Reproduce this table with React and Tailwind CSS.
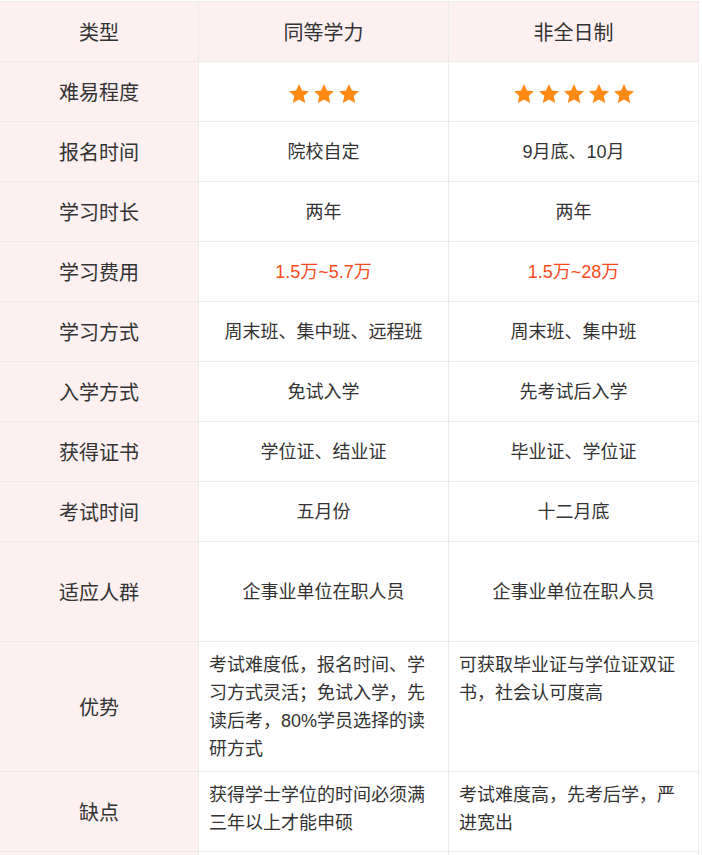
import React from "react";

const Star = () => (
  <svg width="20" height="19" viewBox="1.2 1.2 21.6 20.5" className="block">
    <path
      fill="#ff8a14"
      d="M12 1.2l3.18 7.02 7.62.78-5.7 5.16 1.62 7.5L12 17.82 5.28 21.66l1.62-7.5L1.2 9l7.62-.78z"
    />
  </svg>
);

const Stars = ({ n }) => (
  <div className="flex gap-[5px] mt-[2px]">
    {Array.from({ length: n }).map((_, i) => (
      <Star key={i} />
    ))}
  </div>
);

const rows = [
  { label: "难易程度", a: <Stars n={3} />, b: <Stars n={5} />, h: "h-[60px]" },
  { label: "报名时间", a: "院校自定", b: "9月底、10月", h: "h-[60px]" },
  { label: "学习时长", a: "两年", b: "两年", h: "h-[60px]" },
  {
    label: "学习费用",
    a: <span className="text-[#fa4b1e]">1.5万~5.7万</span>,
    b: <span className="text-[#fa4b1e]">1.5万~28万</span>,
    h: "h-[60px]",
  },
  { label: "学习方式", a: "周末班、集中班、远程班", b: "周末班、集中班", h: "h-[60px]" },
  { label: "入学方式", a: "免试入学", b: "先考试后入学", h: "h-[60px]" },
  { label: "获得证书", a: "学位证、结业证", b: "毕业证、学位证", h: "h-[60px]" },
  { label: "考试时间", a: "五月份", b: "十二月底", h: "h-[60px]" },
  { label: "适应人群", a: "企事业单位在职人员", b: "企事业单位在职人员", h: "h-[100px]" },
  {
    label: "优势",
    a: "考试难度低，报名时间、学习方式灵活；免试入学，先读后考，80%学员选择的读研方式",
    b: "可获取毕业证与学位证双证书，社会认可度高",
    h: "h-[130px]",
    multi: true,
  },
  {
    label: "缺点",
    a: "获得学士学位的时间必须满三年以上才能申硕",
    b: "考试难度高，先考后学，严进宽出",
    h: "h-[80px]",
    multi: true,
  },
  { label: "", a: "", b: "", h: "h-[60px]" },
];

const border = "border-[#ebebeb]";

export default function App() {
  return (
    <div
      className="w-[702px] h-[855px] overflow-hidden bg-white pt-px text-[18px] text-[#333]"
      style={{ fontFamily: '"Liberation Sans", "Noto Sans CJK SC", sans-serif' }}
    >
      <div className={`grid grid-cols-[199px_250px_250px] w-[699px] border-t ${border}`}>
        <div className={`h-[60px] bg-[#fcf0f0] border-r border-b ${border} flex items-center justify-center text-[20px] pt-[2px]`}>类型</div>
        <div className={`h-[60px] bg-[#fcf0f0] border-r border-b ${border} flex items-center justify-center text-[20px] pt-[2px]`}>同等学力</div>
        <div className={`h-[60px] bg-[#fcf0f0] border-r border-b ${border} flex items-center justify-center text-[20px] pt-[2px]`}>非全日制</div>
        {rows.map((r, i) => (
          <React.Fragment key={i}>
            <div className={`${r.h} bg-[#fcf0f0] border-r border-b ${border} flex items-center justify-center text-[20px] pt-[2px]`}>
              {r.label}
            </div>
            {[r.a, r.b].map((c, j) =>
              r.multi ? (
                <div
                  key={j}
                  className={`${r.h} border-r border-b ${border} px-[10px] pt-[9px] leading-[28px] text-left`}
                >
                  {c}
                </div>
              ) : (
                <div
                  key={j}
                  className={`${r.h} border-r border-b ${border} flex items-center justify-center pt-[1px]`}
                >
                  {c}
                </div>
              )
            )}
          </React.Fragment>
        ))}
      </div>
    </div>
  );
}
